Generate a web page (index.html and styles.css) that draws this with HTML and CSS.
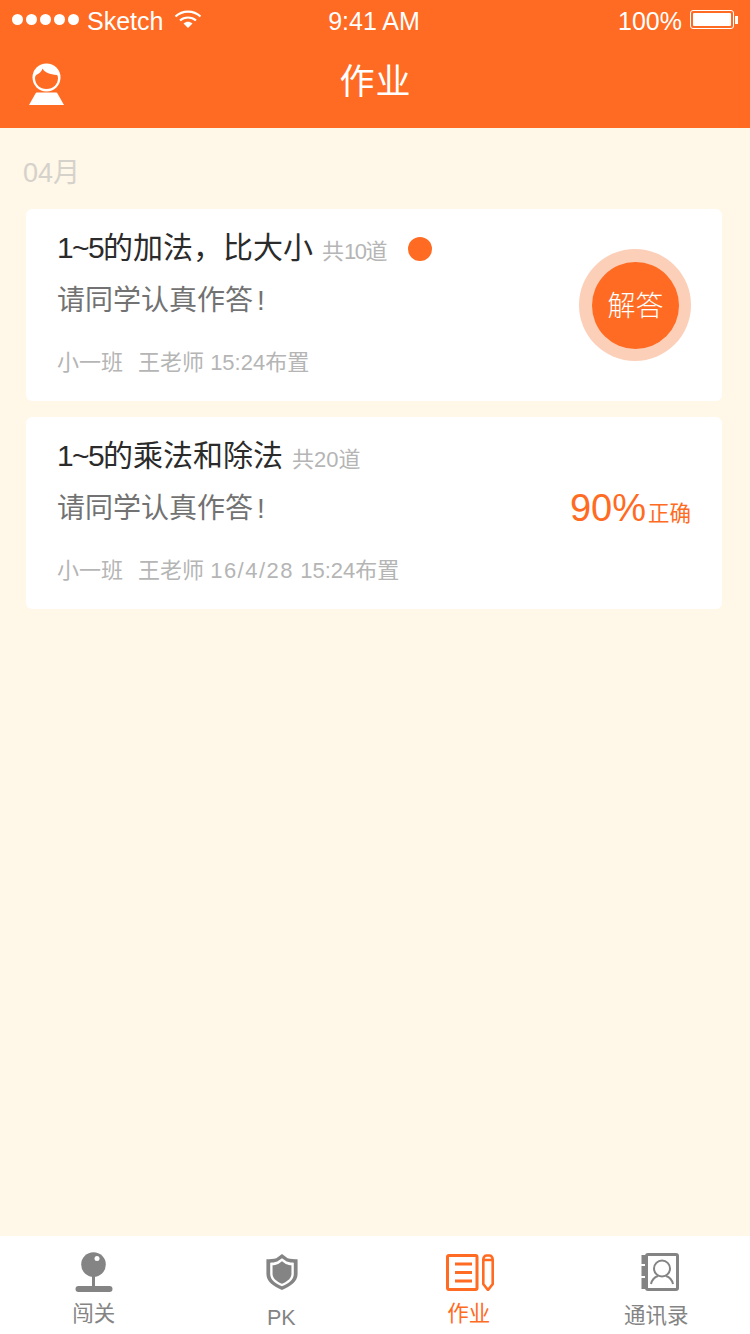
FILE: index.html
```html
<!DOCTYPE html>
<html lang="zh-CN">
<head>
  <meta charset="UTF-8" />
  <meta name="viewport" content="width=device-width, initial-scale=1.0" />
  <title>作业</title>
  <link rel="stylesheet" href="styles.css">
</head>
<body>
  <div class="app">
    <header class="top">
      <div class="status">
        <div class="status-left">
          <span class="signal"><i></i><i></i><i></i><i></i><i></i></span>
          <span class="carrier">Sketch</span>
          <svg class="wifi" width="28" height="20" viewBox="0 0 28 20">
            <path d="M1.5 7.5C8.5 1 19.500 1 26.500 7.500" fill="none" stroke="#fff" stroke-width="2.200"/>
            <path d="M6 11.500C10.500 7.500 17.500 7.500 22 11.500" fill="none" stroke="#fff" stroke-width="2.200"/>
            <path d="M9.500 14.500C12.500 12 15.500 12 18.500 14.500L14 19Z" fill="#fff"/>
          </svg>
        </div>
        <div class="status-time">9:41 AM</div>
        <div class="status-right">
          <span>100%</span>
          <span class="battery"><b></b></span>
          <span class="battery-tip"></span>
        </div>
      </div>
      <div class="navbar">
        <svg class="avatar" width="38" height="44" viewBox="0 0 38 44">
          <circle cx="19.500" cy="15.500" r="14" fill="#fff"/>
          <path d="M8 16C8 14 9 13 10 12.500C12.500 11.500 15 9 15.600 6.500C17 10 23 12.500 30 13C30.800 14 31 15 31 16C31 22.500 26 27 19.500 27C13 27 8 22.500 8 16Z" fill="#ff6b22"/>
          <path d="M10 30.500H29C29.800 30.500 30.300 31 30.500 31.500L37 43H2L8.500 31.500C8.700 31 9.200 30.500 10 30.500Z" fill="#fff"/>
        </svg>
        <h1>作业</h1>
      </div>
    </header>

    <main class="content">
      <div class="month">04月</div>

      <section class="card">
        <div class="card-main">
          <div class="title-row">
            <span class="title"><span class="tight">1~5</span>的加法，比大小</span>
            <span class="count">共<span class="tight">10</span>道</span>
            <span class="dot"></span>
          </div>
          <p class="note">请同学认真作答<span class="bang">!</span></p>
          <p class="meta"><span>小一班</span><span>王老师 15:24布置</span></p>
        </div>
        <button class="answer" type="button"><span>解答</span></button>
      </section>

      <section class="card">
        <div class="card-main">
          <div class="title-row">
            <span class="title"><span class="tight">1~5</span>的乘法和除法</span>
            <span class="count">共20道</span>
          </div>
          <p class="note">请同学认真作答<span class="bang">!</span></p>
          <p class="meta"><span>小一班</span><span>王老师 <span class="date">16/4/28</span> 15:24布置</span></p>
        </div>
        <div class="score"><strong>90%</strong><span>正确</span></div>
      </section>
    </main>

    <nav class="tabs">
      <a class="tab">
        <svg class="ico-stage" width="38" height="40" viewBox="0 0 38 40">
          <circle cx="18.500" cy="12.500" r="12.300" fill="#848484"/>
          <circle cx="22" cy="6.500" r="2.500" fill="#fff"/>
          <rect x="17" y="24" width="3" height="11" fill="#848484"/>
          <rect x="0.500" y="34" width="37" height="6" rx="3" fill="#848484"/>
        </svg>
        <span>闯关</span>
      </a>
      <a class="tab tab-pk">
        <svg class="ico-pk" width="34" height="38" viewBox="0 0 36 40">
          <path d="M18 1L24 5.500C27 6.500 31 6.500 34.500 6.500V22C34.500 30 27 35 18 39C9 35 1.500 30 1.500 22V6.500C5 6.500 9 6.500 12 5.500Z" fill="#848484"/>
          <path d="M18 5.500L23 9C26 10 28 10.200 30.500 10.200V22C30.500 28 25 32 18 35.200C11 32 5.500 28 5.500 22V10.200C8 10.200 10 10 13 9Z" fill="#fff"/>
          <path d="M18 8.500L22 11.500C24.500 12.500 26 12.800 28 12.800V22C28 26.500 23.500 30 18 32.500C12.500 30 8 26.500 8 22V12.800C10 12.800 11.500 12.500 14 11.500Z" fill="#848484"/>
        </svg>
        <span>PK</span>
      </a>
      <a class="tab tab-on">
        <svg class="ico-work" width="48" height="37" viewBox="0 0 48 37">
          <rect x="1.500" y="1.500" width="29.500" height="34" rx="1.500" fill="none" stroke="#ff6b22" stroke-width="3"/>
          <path d="M9 10H26M9 18.500H26M9 27H26" stroke="#ff6b22" stroke-width="3" fill="none"/>
          <path d="M37.300 5.500V30L42 36L46.700 30V5.500C46.700 3 45 1.500 43.500 1.500H40.500C39 1.500 37.300 3 37.300 5.500ZM37.300 6H46.700" fill="none" stroke="#ff6b22" stroke-width="2.600"/>
        </svg>
        <span>作业</span>
      </a>
      <a class="tab tab-book">
        <svg class="ico-book" width="38" height="38" viewBox="0 0 38 38">
          <rect x="5.500" y="1.500" width="31" height="35" rx="1.500" fill="none" stroke="#848484" stroke-width="3"/>
          <rect x="0.500" y="2" width="5" height="9" fill="#848484"/>
          <rect x="0.500" y="13" width="5" height="10" fill="#848484"/>
          <rect x="0.500" y="25" width="5" height="11" fill="#848484"/>
          <circle cx="21" cy="15.500" r="8" fill="none" stroke="#848484" stroke-width="2"/>
          <path d="M10 31C11 26.500 14 24 17 23M32 31C31 26.500 28 24 25 23" fill="none" stroke="#848484" stroke-width="2"/>
        </svg>
        <span>通讯录</span>
      </a>
    </nav>
  </div>
</body>
</html>
```

FILE: styles.css
```css
:root {
  --orange: #ff6b22;
  --cream: #fff7e8;
  --grey: #848484;
}
* { box-sizing: border-box; }
body {
  margin: 0;
  font-family: "Liberation Sans", "Noto Sans CJK SC", sans-serif;
  background: var(--cream);
}
.app {
  width: 750px;
  height: 1334px;
  display: flex;
  flex-direction: column;
  overflow: hidden;
}
.top {
  height: 128px;
  background: var(--orange);
  color: #fff;
}
.status {
  height: 40px;
  display: grid;
  grid-template-columns: 1fr auto 1fr;
  align-items: center;
  padding: 2px 12px 0 12px;
  font-size: 25px;
  font-weight: 300;
}
.status-left { display: flex; align-items: center; }
.signal { display: flex; gap: 3px; margin: -4px 8px 0 0; }
.signal i {
  width: 11px;
  height: 11px;
  border-radius: 50%;
  background: #fff;
}
.wifi { margin: -4px 0 0 11px; }
.status-time { text-align: center; margin-left: -2px; }
.status-right {
  display: flex;
  align-items: center;
  justify-content: flex-end;
}
.battery {
  width: 44px;
  height: 19px;
  margin: -3px 0 0 8px;
  padding: 2px;
  border: 1px solid #fff;
  border-radius: 3px;
}
.battery b {
  display: block;
  height: 100%;
  background: #fff;
  border-radius: 1px;
}
.battery-tip {
  width: 3px;
  height: 8px;
  margin: -3px 0 0 1px;
  background: #fff;
}
.navbar {
  position: relative;
  height: 88px;
  display: flex;
  align-items: center;
  justify-content: center;
}
.navbar h1 {
  margin: 0 0 6px;
  font-size: 35px;
  font-weight: 400;
  letter-spacing: 1px;
  line-height: 1;
  padding-left: 1px;
}
.avatar { position: absolute; left: 27px; top: 22px; }
.content {
  flex: 1;
  padding: 0 28px 0 26px;
}
.month {
  height: 81px;
  margin-left: -3px;
  padding-top: 28px;
  font-size: 27px;
  line-height: 34px;
  color: #d5d2cb;
}
.card {
  height: 192px;
  margin-bottom: 16px;
  padding: 0 31px;
  display: flex;
  justify-content: space-between;
  align-items: center;
  background: #fff;
  border-radius: 6px;
}
.card-main { align-self: flex-start; }
.title-row {
  display: flex;
  align-items: center;
  height: 40px;
  margin-top: 19px;
}
.title { font-size: 30px; color: #2b2b2b; line-height: 40px; }
.tight { letter-spacing: -1.6px; }
.count { margin-left: 9px; font-size: 22px; color: #b5b5b5; padding-top: 1px; }
.dot {
  width: 24px;
  height: 24px;
  margin: 2px 0 0 21px;
  border-radius: 50%;
  background: var(--orange);
}
.note {
  margin: 13px 0 0;
  font-size: 28px;
  line-height: 40px;
  color: #727272;
}
.bang { margin-left: 4px; }
.meta {
  margin: 27px 0 0;
  display: flex;
  gap: 15px;
  font-size: 22px;
  line-height: 30px;
  color: #b5b5b5;
}
.date { letter-spacing: 1.500px; }
.answer {
  width: 112px;
  height: 112px;
  padding: 13px 12px 12px 13px;
  border: none;
  border-radius: 50%;
  background: #fccfb9;
  font: inherit;
}
.answer span {
  display: flex;
  align-items: center;
  justify-content: center;
  height: 100%;
  padding-bottom: 3px;
  border-radius: 50%;
  background: var(--orange);
  color: #fff;
  font-size: 28px;
  font-weight: 300;
}
.score {
  display: flex;
  align-items: baseline;
  margin-top: -10px;
  color: var(--orange);
}
.score strong { font-size: 38px; font-weight: 400; margin-right: 2px; }
.score span { font-size: 21.500px; }
.tabs {
  height: 98px;
  display: grid;
  grid-template-columns: repeat(4, 1fr);
  background: #fff;
}
.tab {
  position: relative;
  display: flex;
  flex-direction: column;
  align-items: center;
  justify-content: space-between;
  padding: 16px 0 5px;
  font-size: 21.500px;
  color: var(--grey);
}
.tab span { line-height: 30px; }
.tab-pk { padding-bottom: 1px; }
.tab-book { padding-bottom: 3px; }
.tab-on { color: var(--orange); }
.ico-pk { margin: 1px 0 0 2px; }
.ico-work { margin: 2px 0 0 2px; }
.ico-book { margin: 1px 0 0 8px; }
```
